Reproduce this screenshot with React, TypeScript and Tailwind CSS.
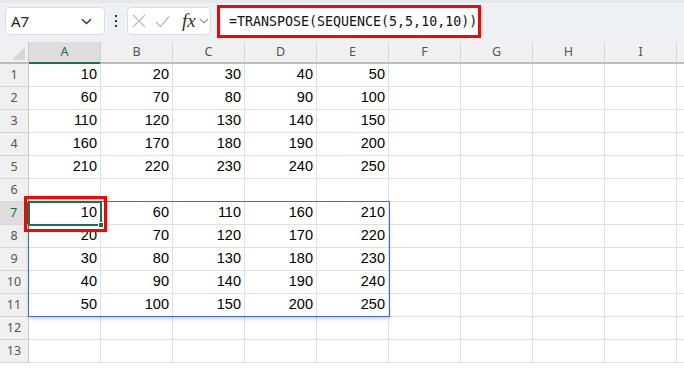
import React from "react";

const cols = ["A", "B", "C", "D", "E", "F", "G", "H", "I"];

function cellValue(row: number, col: number): string {
  if (row >= 1 && row <= 5 && col < 5) return String((row - 1) * 50 + (col + 1) * 10);
  if (row >= 7 && row <= 11 && col < 5) return String(col * 50 + (row - 6) * 10);
  return "";
}

export default function App() {
  const rows = Array.from({ length: 13 }, (_, i) => i + 1);
  return (
    <div
      className="w-[684px] h-[369px] overflow-hidden bg-white flex flex-col"
      style={{ fontFamily: '"Noto Sans", "Open Sans", sans-serif' }}
    >
      {/* Toolbar */}
      <div className="h-[42px] bg-[#eef0f4] border-t-[3px] border-[#e6e8ec] flex items-start pt-[4px] shrink-0">
        <div className="ml-[5px] w-[100px] h-[28px] bg-white rounded-[4px] border border-[#dcdde0] flex items-center pl-[5px] pr-[12px]">
          <span className="text-[15px] text-[#222] leading-none">A7</span>
          <svg className="ml-auto" width="11" height="7" viewBox="0 0 11 7">
            <path d="M1 1.2 L5.5 5.5 L10 1.2" fill="none" stroke="#333" strokeWidth="1.4" />
          </svg>
        </div>
        <div className="w-[22px] h-[28px] flex flex-col items-center justify-center gap-[3px]">
          <div className="w-[2px] h-[2px] bg-[#333]" />
          <div className="w-[2px] h-[2px] bg-[#333]" />
          <div className="w-[2px] h-[2px] bg-[#333]" />
        </div>
        <div className="w-[84px] h-[28px] bg-white rounded-[4px] border border-[#dcdde0] flex items-center pl-[4px]">
          <svg width="14" height="14" viewBox="0 0 14 14">
            <path d="M1 1 L13 13 M13 1 L1 13" stroke="#bdbdbd" strokeWidth="1.3" fill="none" />
          </svg>
          <svg className="ml-[9px]" width="15" height="13" viewBox="0 0 15 13">
            <path d="M1 7 L5.5 11.5 L14 1.5" stroke="#bdbdbd" strokeWidth="1.3" fill="none" />
          </svg>
          <span
            className="ml-[12px] text-[19px] italic text-[#333] leading-none -mt-[2px]"
            style={{ fontFamily: '"Liberation Serif", serif' }}
          >
            fx
          </span>
          <svg className="ml-[3px]" width="10" height="6" viewBox="0 0 10 6">
            <path d="M1 1 L5 5 L9 1" fill="none" stroke="#999" strokeWidth="1.2" />
          </svg>
        </div>
        <div className="ml-[6px] -mt-[2px] w-[264px] h-[33px] bg-white border-[3px] border-[#ff0000] flex items-center pl-[9px]">
          <span
            className="text-[13.3px] text-[#111] leading-none"
            style={{ fontFamily: '"DejaVu Sans Mono", "Liberation Mono", monospace' }}
          >
            =TRANSPOSE(SEQUENCE(5,5,10,10))
          </span>
        </div>
      </div>

      {/* Grid */}
      <div className="relative flex-1">
        {/* Header row */}
        <div className="flex h-[22px] bg-[#f0f0f0] border-b-2 border-[#bcbcbc]">
          <div className="w-[29px] shrink-0 border-r border-[#c8c8c8] relative">
            <svg className="absolute right-[3px] bottom-[2px]" width="13" height="13" viewBox="0 0 13 13">
              <path d="M13 0 L13 13 L0 13 Z" fill="#d6d6d6" />
            </svg>
          </div>
          {cols.map((c) => (
            <div
              key={c}
              className={
                c === "A"
                  ? "w-[72px] shrink-0 bg-[#dedede] border-r border-[#d0d0d0] flex items-center justify-center text-[12.5px] text-[#1d6b41] relative"
                  : "w-[72px] shrink-0 border-r border-[#d6d6d6] flex items-center justify-center text-[12.5px] text-[#555]"
              }
            >
              {c}
              {c === "A" && <div className="absolute left-0 right-0 -bottom-[2px] h-[2px] bg-[#1e7145]" />}
            </div>
          ))}
          <div className="flex-1" />
        </div>

        {rows.map((r) => (
          <div key={r} className="flex h-[23px]">
            <div
              className={
                r === 7
                  ? "w-[29px] shrink-0 bg-[#dedede] border-b border-[#d6d6d6] border-r-2 border-r-[#1e7145] flex items-center justify-center text-[12.5px] text-[#1d6b41]"
                  : "w-[29px] shrink-0 bg-[#f0f0f0] border-b border-[#d6d6d6] border-r border-r-[#c8c8c8] flex items-center justify-center text-[12.5px] text-[#555]"
              }
            >
              {r}
            </div>
            {cols.map((c, ci) => (
              <div
                key={c}
                className="w-[72px] shrink-0 border-r border-b border-[#e0e0e0] flex items-center justify-end pr-[3px] text-[14.5px] text-black"
                style={{ fontFamily: '"Liberation Sans", Arial, sans-serif' }}
              >
                {cellValue(r, ci)}
              </div>
            ))}
            <div className="flex-1 border-b border-[#e0e0e0]" />
          </div>
        ))}

        {/* Spill range border */}
        <div className="absolute left-[28px] top-[159px] w-[362px] h-[116px] border border-[#3b6cc8] shadow-[0_3px_4px_-1px_rgba(0,0,0,0.18)] pointer-events-none" />
        {/* Active cell */}
        <div className="absolute left-[28px] top-[159px] w-[74px] h-[25px] border-2 border-[#1e7145] pointer-events-none" />
        <div className="absolute left-[98px] top-[180px] w-[6px] h-[6px] bg-[#1e7145] border border-white pointer-events-none" />
        {/* Red highlight box */}
        <div className="absolute left-[24px] top-[154px] w-[83px] h-[36px] border-[3px] border-[#ff0000] pointer-events-none" />
      </div>
    </div>
  );
}
